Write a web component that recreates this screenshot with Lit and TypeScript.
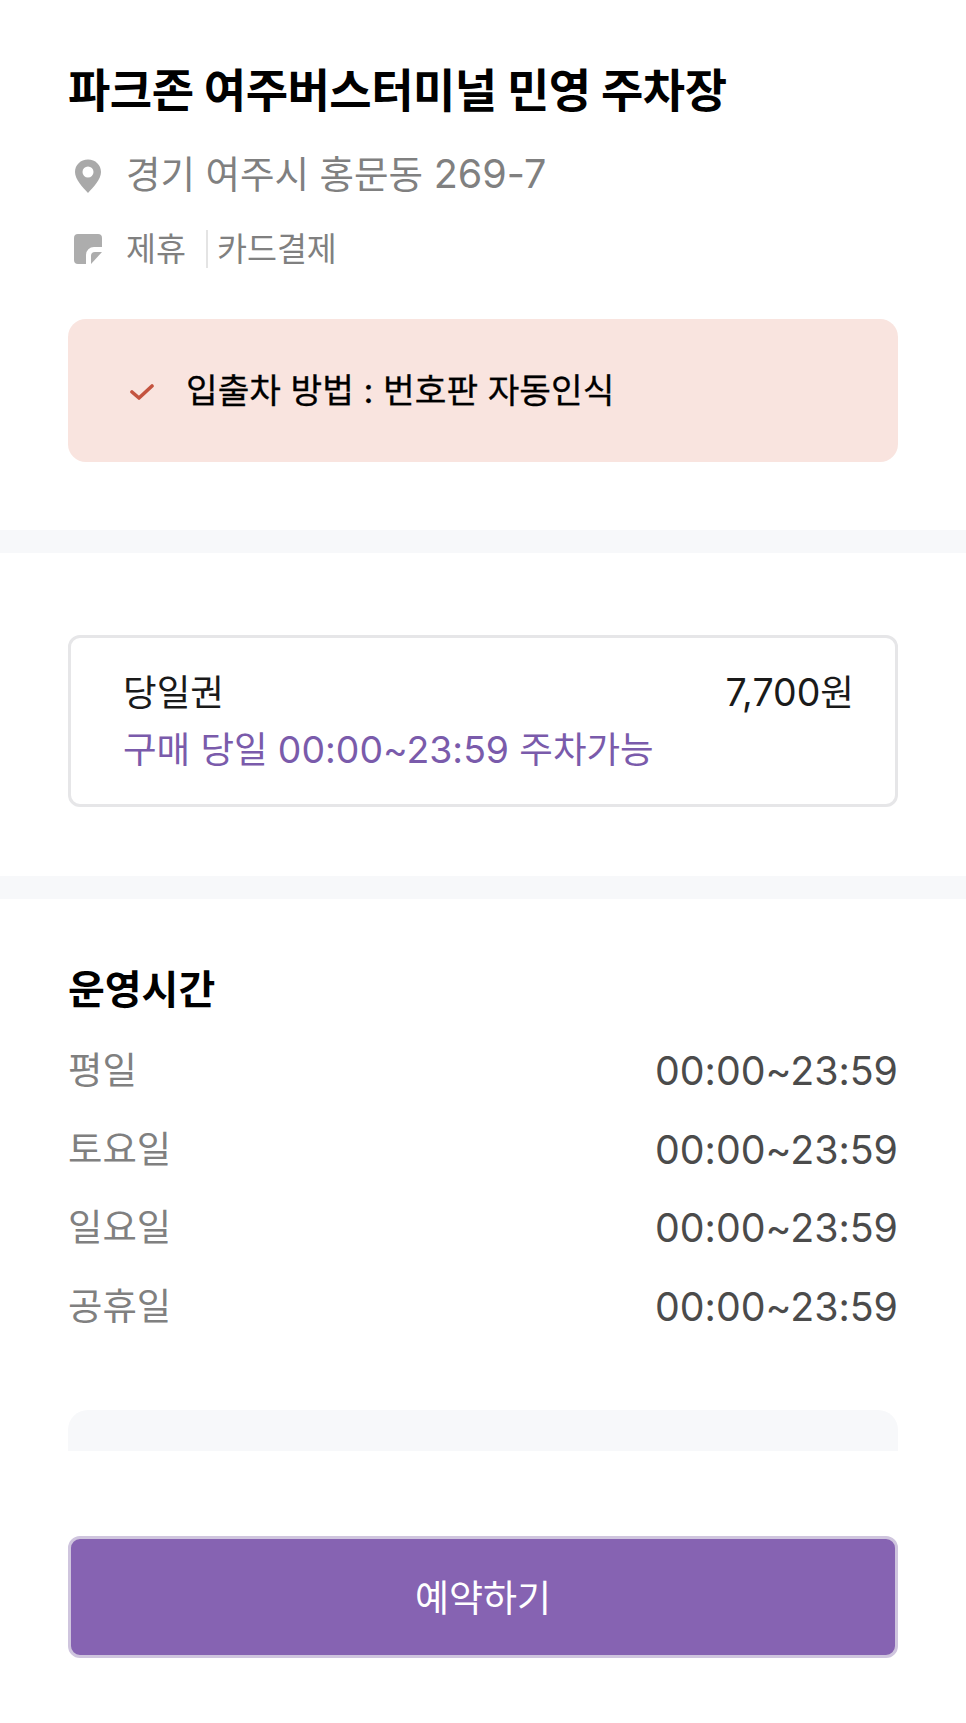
import { LitElement, css, html } from "lit";
import { customElement } from "lit/decorators.js";

const HOURS = [
  ["평일", "00:00~23:59"],
  ["토요일", "00:00~23:59"],
  ["일요일", "00:00~23:59"],
  ["공휴일", "00:00~23:59"],
];

@customElement("app-root")
export class AppRoot extends LitElement {
  override render() {
    return html`
      <main>
        <section class="head">
          <h1>파크존 여주버스터미널 민영 주차장</h1>
          <div class="addr">
            <svg class="ico" viewBox="0 0 30 36" width="30" height="36">
              <path
                fill="#a9a9a9"
                fill-rule="evenodd"
                d="M15 1.500C7.500 1.500 2 7 2 14c0 7.500 8 15.500 13 21 5-5.500 13-13.500 13-21 0-7-5.500-12.500-13-12.500Zm0 7a5.500 5.500 0 1 1 0 11 5.500 5.500 0 0 1 0-11Z"
              />
            </svg>
            <span>경기 여주시 홍문동 <span class="num">269-7</span></span>
          </div>
          <div class="tags">
            <svg class="ico" viewBox="0 0 30 30" width="30" height="30">
              <path fill="#adadad" d="M5 0h20a4 4 0 0 1 4 4v9h-8a8 8 0 0 0-8 8v9H5a4 4 0 0 1-4-4V4a4 4 0 0 1 4-4Z" />
              <path fill="#adadad" d="M18 30v-8a4 4 0 0 1 4-4h7Z" />
            </svg>
            <span class="tag">제휴</span>
            <span class="sep"></span>
            <span>카드결제</span>
          </div>
          <div class="notice">
            <svg viewBox="0 0 24 16" width="24" height="16">
              <path d="M2 8l7 6L22 2" fill="none" stroke="#c4533f" stroke-width="3.6" stroke-linecap="round" stroke-linejoin="round" />
            </svg>
            <span class="notice-text">입출차 방법 : 번호판 자동인식</span>
          </div>
        </section>

        <section class="ticket-wrap">
          <div class="ticket">
            <div class="ticket-row">
              <span>당일권</span>
              <span><span class="num">7,700</span>원</span>
            </div>
            <div class="ticket-sub">구매 당일 <span class="num">00:00~23:59</span> 주차가능</div>
          </div>
        </section>

        <section class="hours">
          <h2>운영시간</h2>
          <div class="rows">
            ${HOURS.map(
              ([day, time]) => html`
                <div class="row">
                  <span class="day">${day}</span>
                  <span class="time">${time}</span>
                </div>
              `
            )}
          </div>
          <div class="memo"></div>
        </section>

        <footer>
          <button>예약하기</button>
        </footer>
      </main>
    `;
  }

  static override styles = css`
    :host {
      display: block;
      font-family: Inter, "Noto Sans CJK KR", sans-serif;
      background: #fff;
      font-feature-settings: "calt" 0;
    }

    main {
      display: block;
      height: 1723px;
      overflow: hidden;
    }

    section {
      padding: 0 68px;
    }

    .head {
      padding-top: 62px;
      padding-bottom: 68px;
      border-bottom: 23px solid #f7f8fa;
    }

    h1 {
      margin: 0;
      font-size: 46px;
      line-height: 56px;
      font-weight: 700;
      letter-spacing: -0.5px;
      color: #000;
    }

    .addr,
    .tags {
      display: flex;
      align-items: center;
      color: #808080;
    }

    .addr {
      margin-top: 31px;
      font-size: 37.5px;
      line-height: 50px;
    }

    .addr .num {
      font-size: 39.500px;
    }

    .addr .ico {
      margin: 2px 23px 0 5px;
    }

    .tags {
      margin-top: 27px;
      font-size: 32.6px;
      line-height: 44px;
    }

    .tags .ico {
      margin: 0 23px 0 5px;
    }

    .sep {
      width: 2px;
      height: 38px;
      background: #e4e4e4;
      margin: 0 9px 0 20px;
    }

    .notice {
      margin-top: 48px;
      height: 143px;
      box-sizing: border-box;
      display: flex;
      align-items: center;
      gap: 21px;
      padding-left: 62px;
      background: #f9e4df;
      border-radius: 18px;
      font-size: 34.4px;
      color: #000;
    }

    .notice svg {
      margin: 2px 11px 0 0;
    }

    .notice-text {
      margin-bottom: 6px;
      -webkit-text-stroke: 0.3px #000;
    }

    .ticket-wrap {
      padding-top: 82px;
      padding-bottom: 69px;
      border-bottom: 23px solid #f7f8fa;
    }

    .ticket {
      height: 172px;
      box-sizing: border-box;
      border: 3px solid #e6e6e8;
      border-radius: 12px;
      padding: 30px 41px 0 52px;
    }

    .ticket-row {
      display: flex;
      justify-content: space-between;
      font-size: 36.6px;
      line-height: 50px;
      color: #1a1a1a;
    }

    .ticket-row .num {
      font-size: 37.5px;
    }

    .ticket-sub {
      margin-top: 7px;
      font-size: 36.5px;
      line-height: 50px;
      color: #7a5bab;
    }

    .ticket-sub .num {
      font-size: 37.400px;
    }

    .hours {
      padding-top: 66px;
    }

    h2 {
      margin: 0;
      font-size: 40px;
      line-height: 50px;
      font-weight: 700;
      color: #000;
    }

    .rows {
      margin-top: 31px;
      display: flex;
      flex-direction: column;
      gap: 28.6px;
    }

    .row {
      display: flex;
      justify-content: space-between;
      font-size: 37.400px;
      line-height: 50px;
    }

    .day {
      color: #808080;
    }

    .time {
      color: #4b4b4b;
      font-size: 39.300px;
    }

    .memo {
      margin-top: 78px;
      height: 41px;
      background: #f7f8fa;
      border-radius: 20px 20px 0 0;
    }

    footer {
      padding: 85px 68px 0;
    }

    button {
      display: block;
      width: 100%;
      height: 122px;
      box-sizing: border-box;
      border: 3px solid #cfc5de;
      border-radius: 12px;
      background: #8663b2;
      color: #fff;
      font: inherit;
      font-size: 37px;
      padding: 0 0 2px;
    }
  `;
}
